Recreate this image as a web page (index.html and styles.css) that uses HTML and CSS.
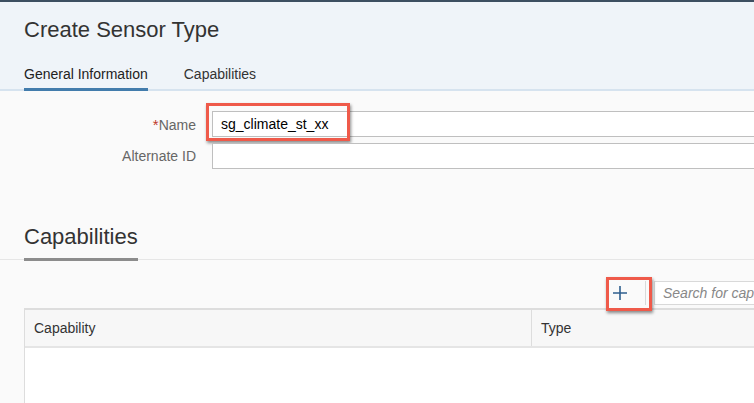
FILE: index.html
```html
<!DOCTYPE html>
<html>
<head>
<meta charset="utf-8">
<link rel="stylesheet" href="styles.css">
</head>
<body>
<div class="page">
  <header class="header">
    <h1 class="title">Create Sensor Type</h1>
    <nav class="tabs">
      <span class="tab tab-active">General Information</span>
      <span class="tab">Capabilities</span>
    </nav>
  </header>

  <section class="form">
    <div class="row">
      <label class="label"><span class="req">*</span>Name</label>
      <div class="field">
        <div class="input">sg_climate_st_xx</div>
        <div class="highlight highlight-name"></div>
      </div>
    </div>
    <div class="row">
      <label class="label">Alternate ID</label>
      <div class="field">
        <div class="input"></div>
      </div>
    </div>
  </section>

  <section class="caps">
    <div class="caps-head">
      <h2 class="caps-title">Capabilities</h2>
    </div>
    <div class="toolbar">
      <div class="add-wrap">
        <button class="add-btn" type="button">
          <svg width="16" height="16" viewBox="0 0 16 16"><path d="M8 1v14M1 8h14" stroke="#2f5f8f" stroke-width="1.6" fill="none"/></svg>
        </button>
        <div class="highlight highlight-add"></div>
      </div>
      <span class="sep"></span>
      <div class="search"><span class="search-text">Search for capabilities</span></div>
    </div>
    <div class="table">
      <div class="thead">
        <div class="th th-cap">Capability</div>
        <div class="th th-type">Type</div>
      </div>
      <div class="tbody"></div>
    </div>
  </section>
</div>
</body>
</html>
```
FILE: styles.css
```css
* { box-sizing: border-box; }
html, body { margin: 0; padding: 0; }
body {
  width: 754px;
  height: 403px;
  overflow: hidden;
  background: #fafafa;
  font-family: "Liberation Sans", Arial, sans-serif;
  color: #333;
}
.page { border-top: 2px solid #3d4f61; }
.header {
  background: #eff4f9;
  border-bottom: 2px solid #d6e3ef;
  padding: 14px 24px 0;
}
.title {
  margin: 0;
  font-size: 22px;
  font-weight: normal;
  color: #333;
  line-height: 28px;
}
.tabs {
  display: flex;
  gap: 36px;
  margin-top: 21px;
}
.tab {
  font-size: 14px;
  line-height: 18px;
  padding-bottom: 5px;
  color: #333;
  border-bottom: 3px solid transparent;
  margin-bottom: -2px;
}
.tab-active { border-bottom-color: #427cac; color: #222; }

.form {
  padding-top: 20px;
  display: flex;
  flex-direction: column;
  gap: 6px;
}
.row {
  display: grid;
  grid-template-columns: 196px 600px;
  column-gap: 16px;
  align-items: center;
  height: 26px;
}
.label {
  text-align: right;
  font-size: 14px;
  color: #666;
}
.req { color: #c0392b; font-size: 15px; }
.field { position: relative; height: 26px; }
.input {
  height: 26px;
  border: 1px solid #bfbfbf;
  background: #fff;
  font-size: 14px;
  color: #000;
  padding: 0 8px;
  line-height: 24px;
}
.highlight {
  position: absolute;
  border: 3px solid #ef5a4a;
  box-shadow: 1px 2px 3px rgba(0,0,0,0.45);
  pointer-events: none;
}
.highlight-name { left: -6px; top: -8px; width: 144px; height: 38px; }

.caps { margin-top: 55px; }
.caps-head {
  border-bottom: 1px solid #e6e6e6;
  padding: 0 24px;
}
.caps-title {
  display: inline-block;
  margin: 0;
  font-size: 22px;
  font-weight: normal;
  color: #333;
  line-height: 26px;
  padding-bottom: 8px;
  border-bottom: 3px solid #8c8c8c;
  margin-bottom: -2px;
}
.toolbar {
  display: flex;
  align-items: center;
  padding: 20px 0 0 607px;
  height: 46px;
}
.add-wrap { position: relative; }
.add-btn {
  display: flex;
  align-items: center;
  justify-content: center;
  width: 26px;
  height: 26px;
  border: none;
  background: transparent;
  padding: 0;
}
.highlight-add { left: -1px; top: -3px; width: 46px; height: 34px; }
.sep {
  flex: none;
  width: 1px;
  height: 24px;
  background: #d9d9d9;
  margin-left: 12px;
  margin-right: 8px;
}
.search {
  flex: 1;
  min-width: 0;
  height: 24px;
  border: 1px solid #d9d9d9;
  border-right: none;
  background: #fff;
  font-size: 14px;
  font-style: italic;
  color: #888;
  line-height: 22px;
  padding-left: 8px;
  white-space: nowrap;
  overflow: hidden;
}
.table {
  margin-left: 24px;
  margin-top: 2px;
  border-left: 1px solid #ddd;
  border-top: 2px solid #ddd;
}
.thead {
  display: grid;
  grid-template-columns: 507px 300px;
  height: 38px;
  background: #f7f7f7;
  border-bottom: 2px solid #e5e5e5;
}
.th {
  font-size: 14px;
  color: #333;
  line-height: 36px;
  padding-left: 9px;
}
.th-cap { border-right: 1px solid #ddd; }
.tbody { background: #fff; height: 60px; }
```
